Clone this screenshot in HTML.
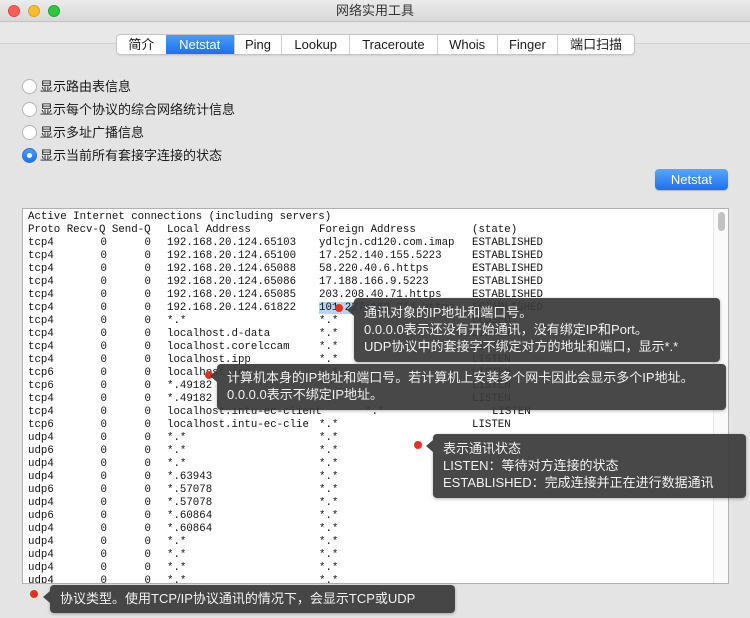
<!DOCTYPE html>
<html><head><meta charset="utf-8">
<style>
*{margin:0;padding:0;box-sizing:border-box}
body{width:750px;height:618px;overflow:hidden;background:#e4e4e4;font-family:"Liberation Sans","Noto Sans CJK SC",sans-serif;position:relative;color:#1a1a1a}
.title{position:absolute;left:0;top:0;width:750px;height:22px;background:linear-gradient(#ebebeb,#d8d8d8);border-bottom:1px solid #c4c4c4;text-align:center;font-size:13px;line-height:22px;color:#333}
.tl{position:absolute;top:5px;width:12px;height:12px;border-radius:50%}
.sep{position:absolute;left:0;top:43px;width:750px;height:1px;background:#d0d0d0}
.top{position:absolute;left:0;top:23px;width:750px;height:20px;background:#e8e8e8}
.tabs{position:absolute;left:116px;top:34px;height:21px;width:519px;background:#fff;border:1px solid #c4c4c4;border-radius:4px;display:flex;font-size:13px;overflow:hidden;box-shadow:0 1px 1px rgba(0,0,0,.08)}
.tabs div{height:100%;line-height:19px;text-align:center;border-left:1px solid #d0d0d0}
.tabs div:first-child{border-left:none}
.tabs .on{background:linear-gradient(#4a9cf7,#1a72ee);color:#fff;border-left:none}
.radio{position:absolute;left:22px;font-size:13px;height:16px;line-height:16px}
.radio i{position:absolute;left:0;top:0;width:15px;height:15px;border-radius:50%;background:#fff;border:1px solid #b5b5b5}
.radio span{position:absolute;left:18px;top:0;white-space:nowrap}
.radio.sel i{background:linear-gradient(#4b9df8,#1b72ec);border-color:#2a74d8}
.radio.sel i:after{content:"";position:absolute;left:4px;top:4px;width:5px;height:5px;border-radius:50%;background:#fff}
.btn{position:absolute;left:655px;top:169px;width:73px;height:21px;border-radius:4px;background:linear-gradient(#5aa6fa,#1a70ee);color:#fff;font-size:13px;text-align:center;line-height:21px;box-shadow:0 1px 1px rgba(0,0,0,.2)}
.ta{position:absolute;left:22px;top:208px;width:707px;height:376px;background:#fff;border:1px solid #b0b0b0;overflow:hidden}
.in{position:absolute;left:0;top:2px;width:690px;height:380px}
.sb{position:absolute;left:690px;top:0;width:16px;height:376px;background:#fafafa;border-left:1px solid #e8e8e8}
.sb i{position:absolute;left:4px;top:3px;width:7px;height:19px;border-radius:4px;background:#c2c2c2}
.r{position:absolute;left:0;height:13px;width:690px;font-family:"Liberation Mono",monospace;font-size:10.75px;line-height:13px;white-space:pre;color:#111}
.r span{position:absolute;top:0}
.a{left:5px}.b{right:606px;text-align:right}.c{right:562px;text-align:right}.d{left:144px}.e{left:296px}.f{left:449px}
.tip{position:absolute;background:rgba(58,58,58,.93);color:#f2f2f2;border-radius:4px;font-size:13px;line-height:17px;padding:3px 10px;white-space:nowrap;box-shadow:0 1px 3px rgba(0,0,0,.3)}
.tip:before{content:"";position:absolute;left:-7px;top:6px;border-right:7px solid rgba(58,58,58,.93);border-top:6px solid transparent;border-bottom:6px solid transparent}
.dot{position:absolute;width:8px;height:8px;border-radius:50%;background:#e8301e}
</style></head><body>
<div class="title">网络实用工具</div>
<div class="tl" style="left:8px;background:#fc5f57;border:1px solid #df4a42"></div>
<div class="tl" style="left:28px;background:#fdbc2e;border:1px solid #de9f22"></div>
<div class="tl" style="left:48px;background:#2bc840;border:1px solid #20a632"></div>
<div class="top"></div>
<div class="sep"></div>
<div class="tabs">
<div style="width:49px">简介</div>
<div class="on" style="width:68px">Netstat</div>
<div style="width:48px">Ping</div>
<div style="width:68px">Lookup</div>
<div style="width:88px">Traceroute</div>
<div style="width:60px">Whois</div>
<div style="width:61px">Finger</div>
<div style="width:77px">端口扫描</div>
</div>
<div class="radio" style="top:79px"><i></i><span>显示路由表信息</span></div>
<div class="radio" style="top:102px"><i></i><span>显示每个协议的综合网络统计信息</span></div>
<div class="radio" style="top:125px"><i></i><span>显示多址广播信息</span></div>
<div class="radio sel" style="top:148px"><i></i><span>显示当前所有套接字连接的状态</span></div>
<div class="btn">Netstat</div>

<div class="ta"><div class="in">
<div class="r" style="top:0px"><span class="a">Active Internet connections (including servers)</span></div>
<div class="r" style="top:13px"><span class="a">Proto Recv-Q Send-Q</span><span class="d">Local Address</span><span class="e">Foreign Address</span><span class="f">(state)</span></div>
<div class="r" style="top:26px"><span class="a">tcp4</span><span class="b">0</span><span class="c">0</span><span class="d">192.168.20.124.65103</span><span class="e">ydlcjn.cd120.com.imap</span><span class="f">ESTABLISHED</span></div>
<div class="r" style="top:39px"><span class="a">tcp4</span><span class="b">0</span><span class="c">0</span><span class="d">192.168.20.124.65100</span><span class="e">17.252.140.155.5223</span><span class="f">ESTABLISHED</span></div>
<div class="r" style="top:52px"><span class="a">tcp4</span><span class="b">0</span><span class="c">0</span><span class="d">192.168.20.124.65088</span><span class="e">58.220.40.6.https</span><span class="f">ESTABLISHED</span></div>
<div class="r" style="top:65px"><span class="a">tcp4</span><span class="b">0</span><span class="c">0</span><span class="d">192.168.20.124.65086</span><span class="e">17.188.166.9.5223</span><span class="f">ESTABLISHED</span></div>
<div class="r" style="top:78px"><span class="a">tcp4</span><span class="b">0</span><span class="c">0</span><span class="d">192.168.20.124.65085</span><span class="e">203.208.40.71.https</span><span class="f">ESTABLISHED</span></div>
<div class="r" style="top:91px"><span class="a">tcp4</span><span class="b">0</span><span class="c">0</span><span class="d">192.168.20.124.61822</span><span class="e"><b style="font-weight:normal;background:#b9d4f2">101.227.169</b>.214.https</span><span class="f">ESTABLISHED</span></div>
<div class="r" style="top:104px"><span class="a">tcp4</span><span class="b">0</span><span class="c">0</span><span class="d">*.*</span><span class="e">*.*</span><span class="f">CLOSED</span></div>
<div class="r" style="top:117px"><span class="a">tcp4</span><span class="b">0</span><span class="c">0</span><span class="d">localhost.d-data</span><span class="e">*.*</span><span class="f">LISTEN</span></div>
<div class="r" style="top:130px"><span class="a">tcp4</span><span class="b">0</span><span class="c">0</span><span class="d">localhost.corelccam</span><span class="e">*.*</span><span class="f">LISTEN</span></div>
<div class="r" style="top:143px"><span class="a">tcp4</span><span class="b">0</span><span class="c">0</span><span class="d">localhost.ipp</span><span class="e">*.*</span><span class="f">LISTEN</span></div>
<div class="r" style="top:156px"><span class="a">tcp6</span><span class="b">0</span><span class="c">0</span><span class="d">localhost.ipp</span><span class="e">*.*</span><span class="f">LISTEN</span></div>
<div class="r" style="top:169px"><span class="a">tcp6</span><span class="b">0</span><span class="c">0</span><span class="d">*.49182</span><span class="e">*.*</span><span class="f">LISTEN</span></div>
<div class="r" style="top:182px"><span class="a">tcp4</span><span class="b">0</span><span class="c">0</span><span class="d">*.49182</span><span class="e">*.*</span><span class="f">LISTEN</span></div>
<div class="r" style="top:195px"><span class="a">tcp4</span><span class="b">0</span><span class="c">0</span><span class="d">localhost.intu-ec-client</span><span class="e" style="left:342px">*.*</span><span class="f" style="left:469px">LISTEN</span></div>
<div class="r" style="top:208px"><span class="a">tcp6</span><span class="b">0</span><span class="c">0</span><span class="d">localhost.intu-ec-clie</span><span class="e">*.*</span><span class="f">LISTEN</span></div>
<div class="r" style="top:221px"><span class="a">udp4</span><span class="b">0</span><span class="c">0</span><span class="d">*.*</span><span class="e">*.*</span></div>
<div class="r" style="top:234px"><span class="a">udp6</span><span class="b">0</span><span class="c">0</span><span class="d">*.*</span><span class="e">*.*</span></div>
<div class="r" style="top:247px"><span class="a">udp4</span><span class="b">0</span><span class="c">0</span><span class="d">*.*</span><span class="e">*.*</span></div>
<div class="r" style="top:260px"><span class="a">udp4</span><span class="b">0</span><span class="c">0</span><span class="d">*.63943</span><span class="e">*.*</span></div>
<div class="r" style="top:273px"><span class="a">udp6</span><span class="b">0</span><span class="c">0</span><span class="d">*.57078</span><span class="e">*.*</span></div>
<div class="r" style="top:286px"><span class="a">udp4</span><span class="b">0</span><span class="c">0</span><span class="d">*.57078</span><span class="e">*.*</span></div>
<div class="r" style="top:299px"><span class="a">udp6</span><span class="b">0</span><span class="c">0</span><span class="d">*.60864</span><span class="e">*.*</span></div>
<div class="r" style="top:312px"><span class="a">udp4</span><span class="b">0</span><span class="c">0</span><span class="d">*.60864</span><span class="e">*.*</span></div>
<div class="r" style="top:325px"><span class="a">udp4</span><span class="b">0</span><span class="c">0</span><span class="d">*.*</span><span class="e">*.*</span></div>
<div class="r" style="top:338px"><span class="a">udp4</span><span class="b">0</span><span class="c">0</span><span class="d">*.*</span><span class="e">*.*</span></div>
<div class="r" style="top:351px"><span class="a">udp4</span><span class="b">0</span><span class="c">0</span><span class="d">*.*</span><span class="e">*.*</span></div>
<div class="r" style="top:364px"><span class="a">udp4</span><span class="b">0</span><span class="c">0</span><span class="d">*.*</span><span class="e">*.*</span></div>
</div>
<div class="sb"><i></i></div>
</div>

<div class="dot" style="left:335px;top:304px"></div>
<div class="tip" style="left:354px;top:298px;width:366px;height:64px;padding-top:6px">通讯对象的IP地址和端口号。<br>0.0.0.0表示还没有开始通讯，没有绑定IP和Port。<br>UDP协议中的套接字不绑定对方的地址和端口，显示*.*</div>
<div class="dot" style="left:205px;top:371px"></div>
<div class="tip" style="left:217px;top:364px;width:509px;height:46px;padding-top:5px">计算机本身的IP地址和端口号。若计算机上安装多个网卡因此会显示多个IP地址。<br>0.0.0.0表示不绑定IP地址。</div>
<div class="dot" style="left:414px;top:441px"></div>
<div class="tip" style="left:433px;top:434px;width:313px;height:64px;padding-top:6px">表示通讯状态<br>LISTEN：等待对方连接的状态<br>ESTABLISHED：完成连接并正在进行数据通讯</div>
<div class="dot" style="left:30px;top:590px"></div>
<div class="tip" style="left:50px;top:585px;width:405px;height:28px;line-height:22px">协议类型。使用TCP/IP协议通讯的情况下，会显示TCP或UDP</div>
</body></html>
